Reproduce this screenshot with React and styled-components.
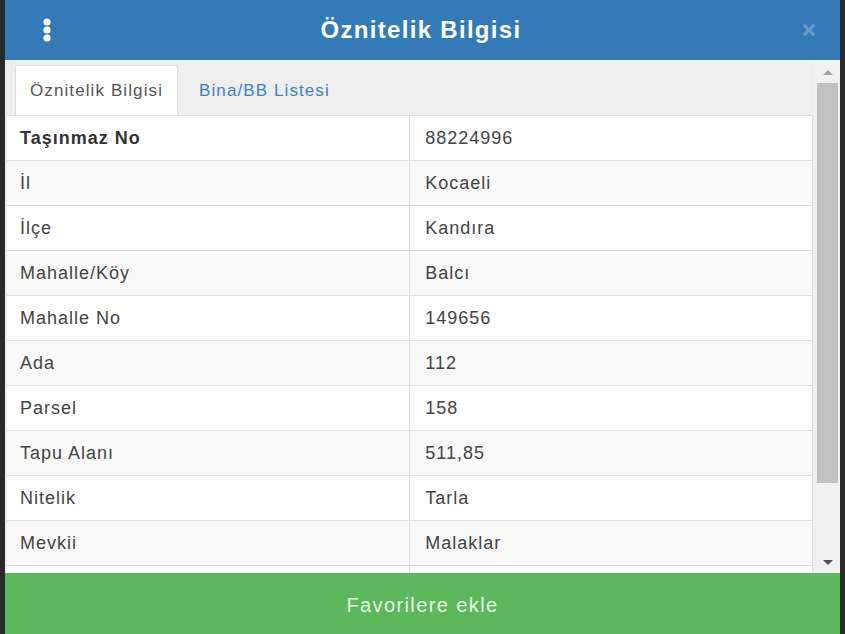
import React from "react";
import styled, { createGlobalStyle } from "styled-components";

const Global = createGlobalStyle`
  html, body { margin: 0; padding: 0; height: 100%; }
  body { background: #2a2a2a; font-family: "Liberation Sans", Arial, sans-serif; overflow: hidden; }
  #root { height: 100%; }
`;

const Frame = styled.div`
  height: 634px;
  width: 845px;
  box-sizing: border-box;
  padding: 0 5px 0 5px;
  display: flex;
  flex-direction: column;
`;

const Header = styled.header`
  height: 60px;
  background: #337ab7;
  display: flex;
  align-items: center;
  justify-content: space-between;
  padding: 0 24px 0 35px;
  color: #fff;
  flex-shrink: 0;
`;

const Title = styled.h1`
  margin: 0;
  font-size: 24px;
  letter-spacing: 1.3px;
  font-weight: bold;
  color: #fff;
  flex: 1;
  text-align: center;
  padding-right: 14px;
`;

const IconBtn = styled.span`
  display: flex;
  align-items: center;
  width: 14px;
  justify-content: center;
`;

const Body = styled.div`
  flex: 1;
  display: flex;
  background: #eeeeee;
  min-height: 0;
`;

const Content = styled.div`
  flex: 1;
  padding: 5px 0 0 2px;
  overflow: hidden;
  display: flex;
  flex-direction: column;
`;

const Tabs = styled.ul`
  list-style: none;
  margin: 0 0 0 8px;
  padding: 0;
  display: flex;
  height: 50px;
`;

const Tab = styled.li`
  padding: 0 14px;
  display: flex;
  align-items: center;
  font-size: 17px;
  letter-spacing: 1.1px;
  height: 50px;
  box-sizing: border-box;
  background: ${(p) => (p.$active ? "#fff" : "transparent")};
  color: ${(p) => (p.$active ? "#555" : "#3f80bf")};
  border: 1px solid ${(p) => (p.$active ? "#ddd" : "transparent")};
  border-bottom: none;
  border-radius: 3px 3px 0 0;
  margin-right: 6px;
`;

const Table = styled.table`
  width: 806px;
  border-collapse: collapse;
  background: #fff;
  font-size: 18px;
  letter-spacing: 1px;
  color: #444;
  border-top: 1px solid #ddd;
`;

const Row = styled.tr`
  background: ${(p) => (p.$striped ? "#f9f9f9" : "#fff")};
`;

const Cell = styled.td`
  height: 45px;
  padding: 0 13px;
  border-bottom: 1px solid #ddd;
  border-right: 1px solid #ddd;
  font-weight: ${(p) => (p.$bold ? "bold" : "normal")};
  color: ${(p) => (p.$bold ? "#333" : "#444")};
  width: 50%;
  box-sizing: border-box;
  &:last-child { padding-left: 15px; }
`;

const Scrollbar = styled.div`
  width: 25px;
  display: flex;
  flex-direction: column;
  align-items: center;
  background: #f1f1f1;
  flex-shrink: 0;
  padding-top: 10px;
  box-sizing: border-box;
`;

const Arrow = styled.div`
  width: 0;
  height: 0;
  border-left: 5px solid transparent;
  border-right: 5px solid transparent;
  ${(p) => (p.$up ? "border-bottom: 5px solid #a3a3a3;" : "border-top: 5px solid #505050;")}
  margin: ${(p) => (p.$up ? "0 0 8px" : "auto 0 8px")};
`;

const Thumb = styled.div`
  width: 21px;
  height: 400px;
  background: #c1c1c1;
`;

const Footer = styled.button`
  height: 61px;
  flex-shrink: 0;
  border: none;
  background: #5cb85c;
  color: #eaf7e4;
  font-family: "Liberation Sans", Arial, sans-serif;
  font-size: 20px;
  letter-spacing: 1.4px;
  padding: 4px 0 0;
  text-align: center;
`;

const rows = [
  ["Taşınmaz No", "88224996", true],
  ["İl", "Kocaeli"],
  ["İlçe", "Kandıra"],
  ["Mahalle/Köy", "Balcı"],
  ["Mahalle No", "149656"],
  ["Ada", "112"],
  ["Parsel", "158"],
  ["Tapu Alanı", "511,85"],
  ["Nitelik", "Tarla"],
  ["Mevkii", "Malaklar"],
  ["", ""],
];

export default function App() {
  return (
    <>
      <Global />
      <Frame>
        <Header>
          <IconBtn>
            <svg width="10" height="24" viewBox="0 0 10 24">
              <circle cx="5" cy="4" r="3.6" fill="#fff" />
              <circle cx="5" cy="12" r="3.6" fill="#fff" />
              <circle cx="5" cy="20" r="3.6" fill="#fff" />
            </svg>
          </IconBtn>
          <Title>Öznitelik Bilgisi</Title>
          <IconBtn>
            <svg width="16" height="16" viewBox="0 0 16 16">
              <path d="M3 3 L13 13 M13 3 L3 13" stroke="#6a9bcc" strokeWidth="3.4" strokeLinecap="round" />
            </svg>
          </IconBtn>
        </Header>
        <Body>
          <Content>
            <Tabs>
              <Tab $active>Öznitelik Bilgisi</Tab>
              <Tab>Bina/BB Listesi</Tab>
            </Tabs>
            <Table>
              <tbody>
                {rows.map(([k, v, b], i) => (
                  <Row key={i} $striped={i % 2 === 1}>
                    <Cell $bold={b}>{k}</Cell>
                    <Cell>{v}</Cell>
                  </Row>
                ))}
              </tbody>
            </Table>
          </Content>
          <Scrollbar>
            <Arrow $up />
            <Thumb />
            <Arrow />
          </Scrollbar>
        </Body>
        <Footer>Favorilere ekle</Footer>
      </Frame>
    </>
  );
}
